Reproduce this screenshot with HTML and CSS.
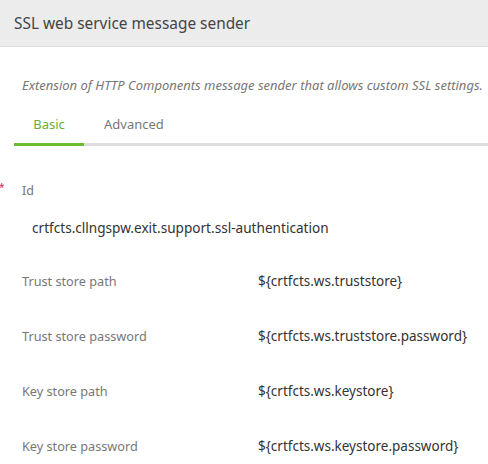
FILE: index.html
```html
<!DOCTYPE html>
<html>
<head>
<meta charset="utf-8">
<link rel="stylesheet" href="styles.css">
</head>
<body>
<div class="panel">
  <header class="header"><h1 class="title">SSL web service message sender</h1></header>
  <p class="desc">Extension of HTTP Components message sender that allows custom SSL settings.</p>
  <nav class="tabs">
    <span class="tab active">Basic</span>
    <span class="tab">Advanced</span>
  </nav>
  <section class="form">
    <div class="id-field">
      <div class="id-label"><span class="req">*</span>Id</div>
      <div class="id-value">crtfcts.cllngspw.exit.support.ssl-authentication</div>
    </div>
    <div class="rows">
      <div class="row"><span class="label">Trust store path</span><span class="value">${crtfcts.ws.truststore}</span></div>
      <div class="row"><span class="label">Trust store password</span><span class="value">${crtfcts.ws.truststore.password}</span></div>
      <div class="row"><span class="label">Key store path</span><span class="value">${crtfcts.ws.keystore}</span></div>
      <div class="row last"><span class="label">Key store password</span><span class="value">${crtfcts.ws.keystore.password}</span></div>
    </div>
  </section>
</div>
</body>
</html>
```
FILE: styles.css
```css
html, body { margin: 0; padding: 0; background: #fff; }
body { font-family: "Noto Sans", "Open Sans", sans-serif; width: 488px; height: 464px; overflow: hidden; }
.header { background: #ececec; border-bottom: 1px solid #dcdcdc; height: 46px; display: flex; align-items: center; padding-left: 14px; }
.title { margin: 0; font-size: 15.4px; font-weight: 400; color: #444; }
.desc { margin: 0; padding: 30px 0 0 22px; height: 17px; font-size: 13px; font-style: italic; color: #777; white-space: nowrap; line-height: 17px; }
.tabs { display: flex; margin: 14px 0 0 14px; border-bottom: 3px solid #dedede; }
.tab { font-size: 13px; color: #777; padding: 0 20px 3px; height: 32px; display: flex; align-items: center; margin-bottom: -3px; border-bottom: 3px solid transparent; }
.tab.active { color: #6aaf35; border-bottom-color: #6dbb2f; width: 30px; justify-content: center; }
.form { padding-top: 36px; }
.id-label { position: relative; padding-left: 22px; font-size: 12.5px; color: #777; height: 18px; line-height: 18px; }
.req { position: absolute; left: -1px; top: -4px; color: #d0245a; font-size: 10px; }
.id-value { padding: 19px 0 0 32px; font-size: 13.6px; color: #333; height: 18px; line-height: 18px; }
.rows { display: flex; flex-direction: column; margin-top: 35px; }
.row { display: flex; padding-left: 22px; height: 55px; align-items: flex-start; }
.row.last { height: 18px; }
.label { width: 236px; font-size: 12.7px; color: #777; line-height: 18px; }
.value { font-size: 13.5px; color: #333; line-height: 18px; }
```
